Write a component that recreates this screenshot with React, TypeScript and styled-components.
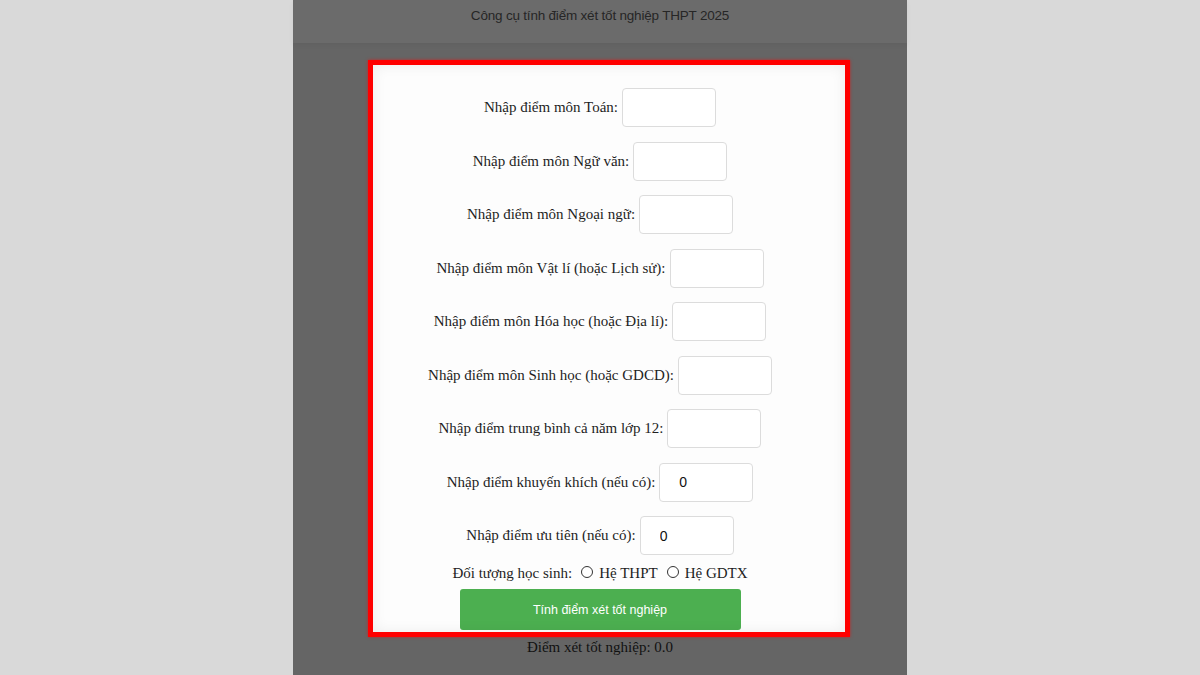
import React, { useState } from 'react';
import styled, { createGlobalStyle } from 'styled-components';

const GlobalStyle = createGlobalStyle`
  html, body {
    margin: 0;
    padding: 0;
    height: 100%;
    background: #d9d9d9;
    overflow: hidden;
  }
  #root {
    height: 100%;
  }
`;

const fields = [
  { id: 'toan', label: 'Nhập điểm môn Toán:', value: '' },
  { id: 'van', label: 'Nhập điểm môn Ngữ văn:', value: '' },
  { id: 'ngoaingu', label: 'Nhập điểm môn Ngoại ngữ:', value: '' },
  { id: 'ly', label: 'Nhập điểm môn Vật lí (hoặc Lịch sử):', value: '' },
  { id: 'hoa', label: 'Nhập điểm môn Hóa học (hoặc Địa lí):', value: '' },
  { id: 'sinh', label: 'Nhập điểm môn Sinh học (hoặc GDCD):', value: '' },
  { id: 'tb12', label: 'Nhập điểm trung bình cả năm lớp 12:', value: '' },
  { id: 'kk', label: 'Nhập điểm khuyến khích (nếu có):', value: '0' },
  { id: 'ut', label: 'Nhập điểm ưu tiên (nếu có):', value: '0' },
];

export default function App() {
  const [values, setValues] = useState<Record<string, string>>(
    Object.fromEntries(fields.map((f) => [f.id, f.value]))
  );
  const [kind, setKind] = useState('');

  return (
    <>
      <GlobalStyle />
      <Page>
        <Column>
          <Header>Công cụ tính điểm xét tốt nghiệp THPT 2025</Header>
          <Main>
            <Card>
              <Rows>
                {fields.map((f) => (
                  <Row key={f.id}>
                    <Label htmlFor={f.id}>{f.label}</Label>
                    <ScoreInput
                      id={f.id}
                      value={values[f.id]}
                      onChange={(e) => setValues({ ...values, [f.id]: e.target.value })}
                    />
                  </Row>
                ))}
              </Rows>
              <RadioRow>
                <span>Đối tượng học sinh:</span>
                <RadioLabel>
                  <Radio name="kind" checked={kind === 'thpt'} onChange={() => setKind('thpt')} />
                  Hệ THPT
                </RadioLabel>
                <RadioLabel>
                  <Radio name="kind" checked={kind === 'gdtx'} onChange={() => setKind('gdtx')} />
                  Hệ GDTX
                </RadioLabel>
              </RadioRow>
              <SubmitButton type="button">Tính điểm xét tốt nghiệp</SubmitButton>
            </Card>
            <Result>Điểm xét tốt nghiệp: 0.0</Result>
          </Main>
        </Column>
      </Page>
    </>
  );
}

const Page = styled.div`
  height: 100%;
  display: flex;
  justify-content: center;
`;

const Column = styled.div`
  width: 614px;
  height: 100%;
  background: #656565;
  display: flex;
  flex-direction: column;
`;

const Header = styled.div`
  height: 43px;
  box-sizing: border-box;
  padding-top: 8px;
  background: #6b6b6b;
  box-shadow: 0 2px 5px rgba(0, 0, 0, 0.05);
  text-align: center;
  font-family: 'Liberation Sans', Arial, sans-serif;
  font-size: 13.5px;
  letter-spacing: -0.2px;
  color: #262626;
`;

const Main = styled.div`
  padding-top: 17px;
  display: flex;
  flex-direction: column;
`;

const Card = styled.div`
  margin-left: 75px;
  width: 482px;
  height: 577px;
  box-sizing: border-box;
  border: 5px solid #ff0000;
  box-shadow: 0 0 3px rgba(255, 0, 0, 0.6);
  background: #fdfdfd;
  padding: 23px 18px 0 0;
  display: flex;
  flex-direction: column;
  align-items: center;
  font-family: 'Liberation Serif', 'Times New Roman', serif;
  font-size: 15px;
  color: #1e1e1e;
  position: relative;

  &::after {
    content: '';
    position: absolute;
    inset: 0;
    box-shadow: inset 0 0 14px rgba(0, 0, 0, 0.07);
    pointer-events: none;
  }
`;

const Rows = styled.div`
  display: flex;
  flex-direction: column;
  gap: 14.5px;
  width: 100%;
`;

const Row = styled.div`
  display: flex;
  justify-content: center;
  align-items: center;
  gap: 4px;
  height: 39px;
`;

const Label = styled.label`
  white-space: nowrap;
`;

const ScoreInput = styled.input`
  width: 94px;
  height: 39px;
  box-sizing: border-box;
  border: 1px solid #dcdcdc;
  border-radius: 4px;
  background: #fff;
  padding: 0 0 0 19px;
  font-family: 'Liberation Sans', Arial, sans-serif;
  font-size: 14px;
  color: #111;
  outline: none;
`;

const RadioRow = styled.div`
  margin-top: 8px;
  height: 20px;
  display: flex;
  align-items: center;
  gap: 9px;
  white-space: nowrap;
`;

const RadioLabel = styled.label`
  display: flex;
  align-items: center;
  gap: 6px;
`;

const Radio = styled.input.attrs({ type: 'radio' })`
  appearance: none;
  margin: 0 0 3px 0;
  width: 12px;
  height: 12px;
  border: 1px solid #333;
  border-radius: 50%;
  background: #fff;
  box-sizing: border-box;

  &:checked {
    background: radial-gradient(circle, #333 0 3px, #fff 3.5px);
  }
`;

const SubmitButton = styled.button`
  margin-top: 6px;
  width: 281px;
  height: 41px;
  border: none;
  border-radius: 3px;
  background: #4caf50;
  color: #fff;
  font-family: 'Liberation Sans', Arial, sans-serif;
  font-size: 12.5px;
  cursor: pointer;
`;

const Result = styled.div`
  margin-top: 1px;
  text-align: center;
  font-family: 'Liberation Serif', 'Times New Roman', serif;
  font-size: 15px;
  line-height: 18px;
  color: #111;
`;
